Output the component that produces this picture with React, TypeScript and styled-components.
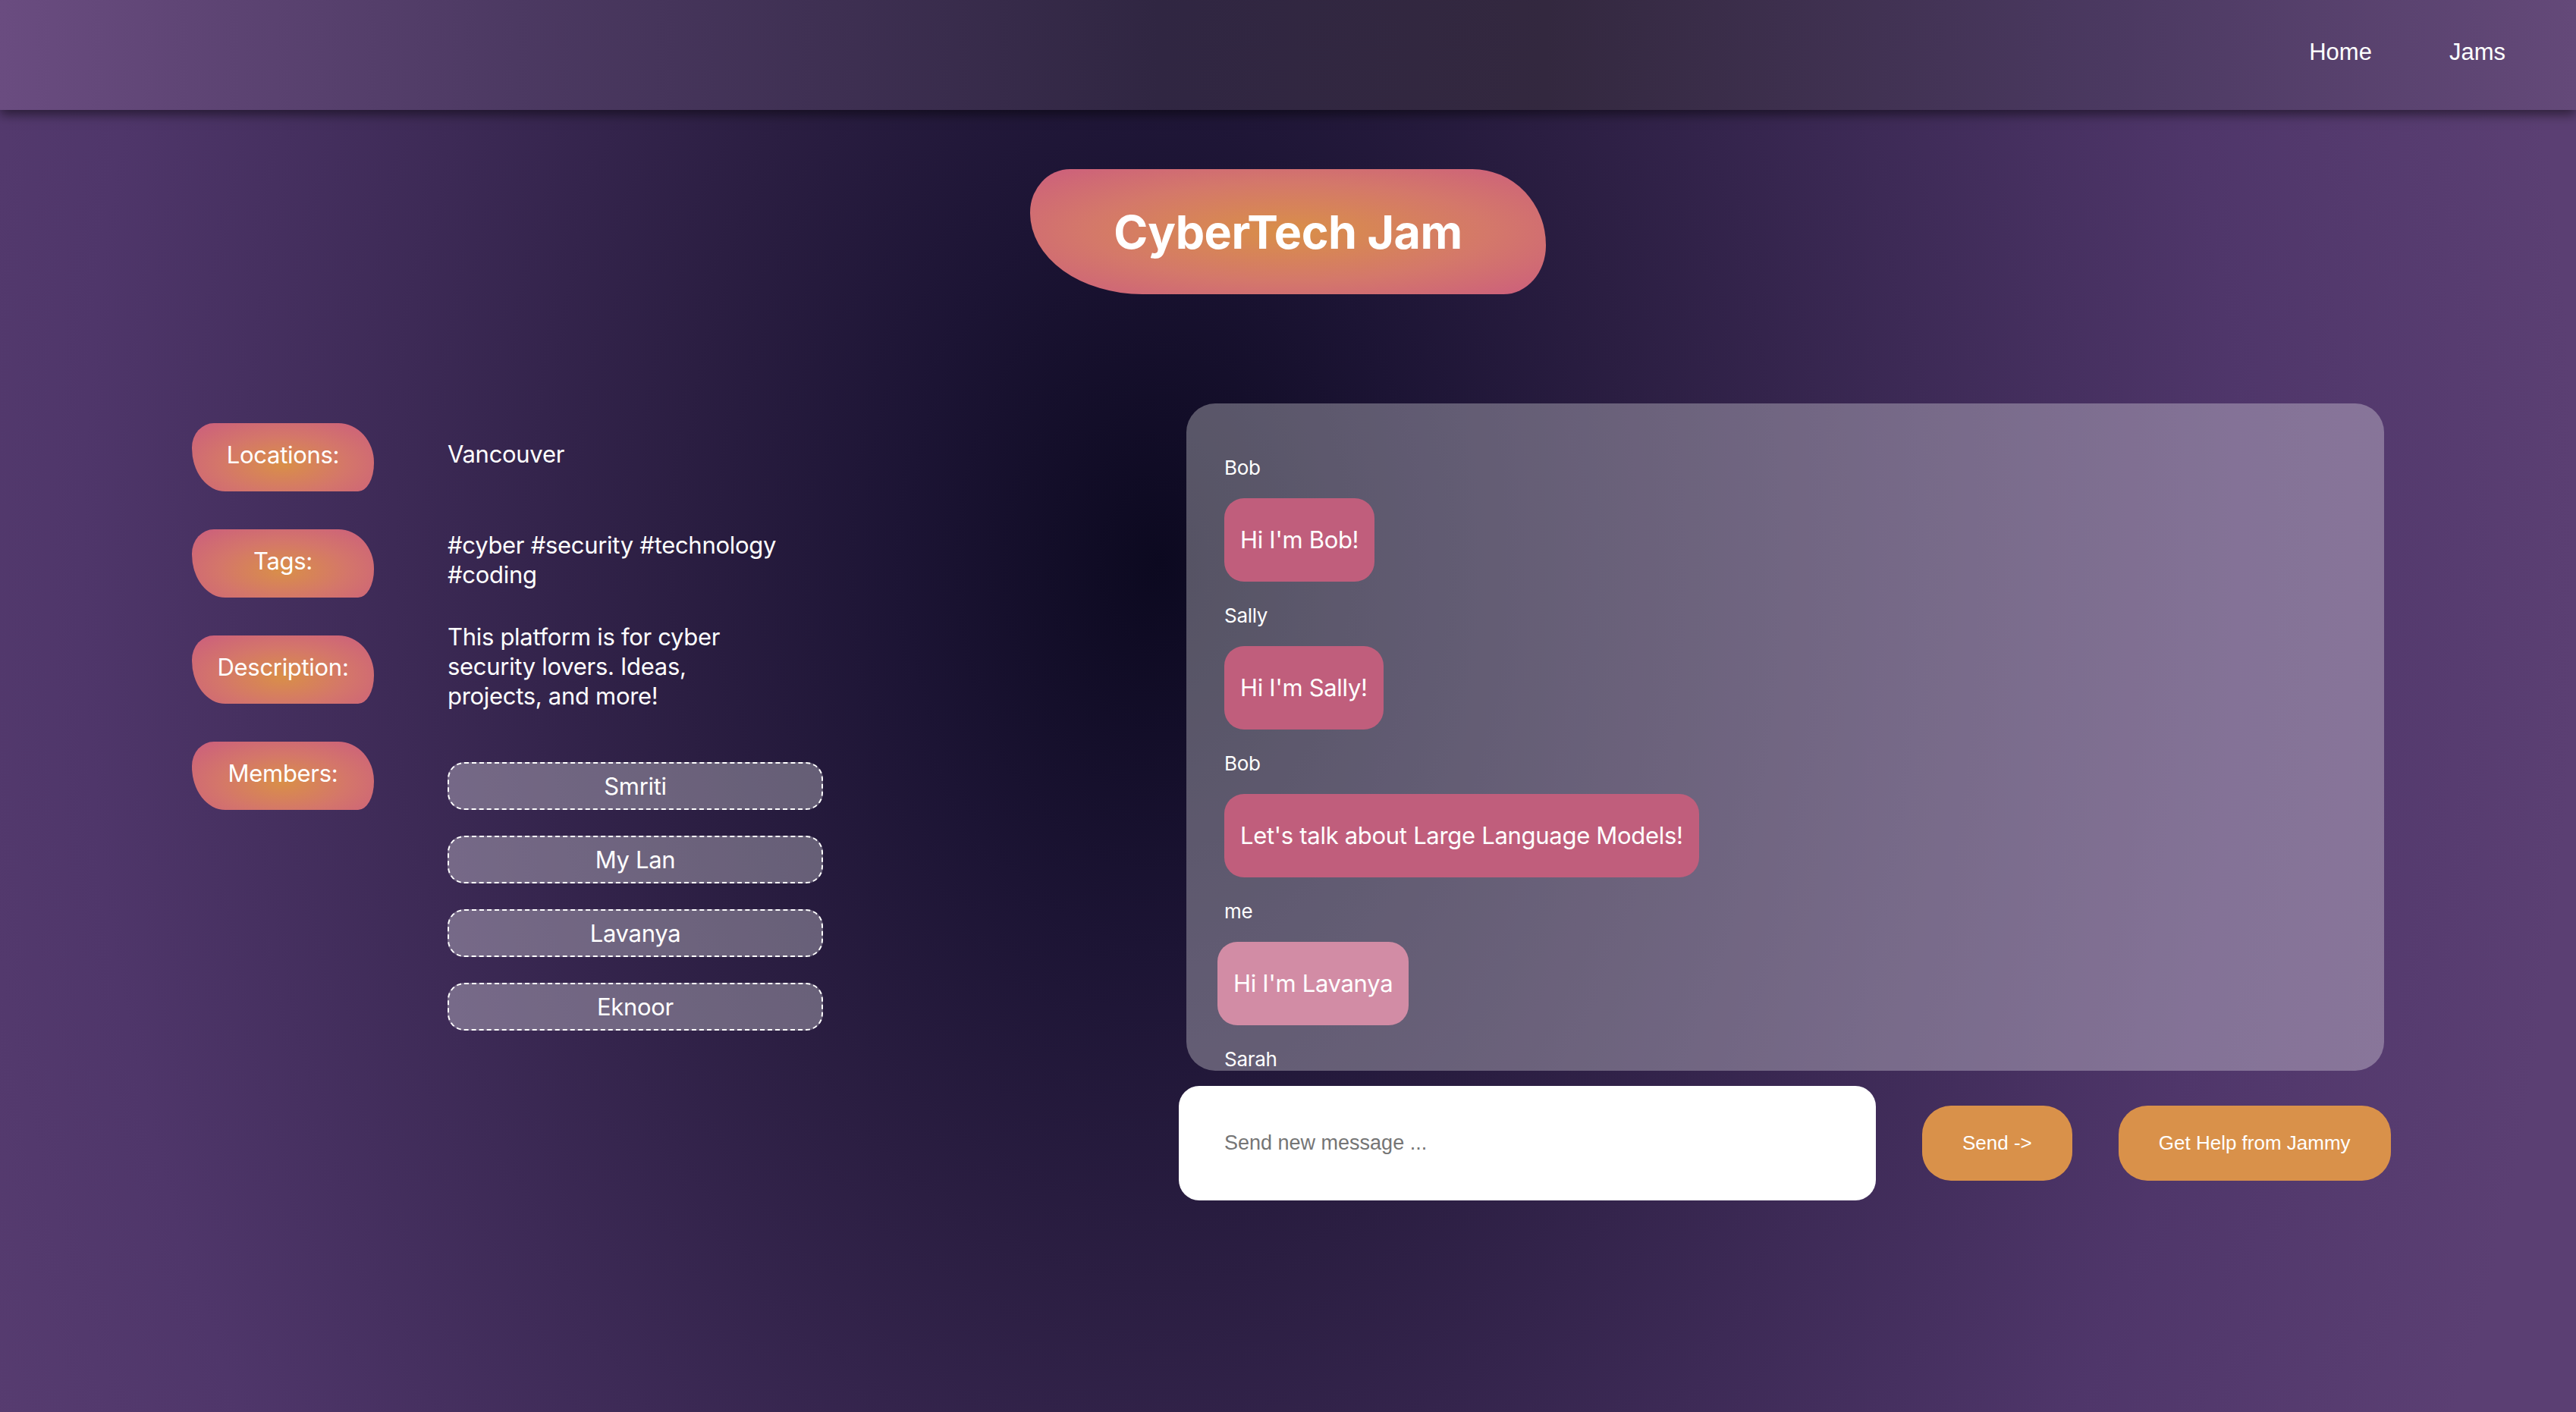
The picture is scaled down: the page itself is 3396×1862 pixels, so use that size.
import styled, { createGlobalStyle } from 'styled-components';

const GlobalStyle = createGlobalStyle`
  html, body {
    margin: 0;
    padding: 0;
  }

  body {
    font-family: Inter, "Noto Sans", sans-serif;
    letter-spacing: -0.3px;
    color: #fff;
  }

  * {
    box-sizing: border-box;
  }
`;

const Page = styled.div`
  min-height: 100vh;
  background: radial-gradient(ellipse 55% 150% at 45% 40%, #0c0920 0%, #1c1434 18%, #2b1e42 34%, #3d2a56 54%, #4f366a 76%, #5b3f73 100%);
`;

const Nav = styled.nav`
  position: relative;
  z-index: 1;
  height: 145px;
  display: flex;
  align-items: center;
  justify-content: flex-end;
  gap: 102px;
  padding: 0 93px 8px 0;
  background: linear-gradient(90deg, #6a4c80 0%, #4c3962 20%, #302642 45%, #33283f 60%, #4b3961 82%, #644979 100%);
  box-shadow: 0 6px 14px rgba(0, 0, 0, 0.5);
`;

const NavLink = styled.a`
  font-family: "Liberation Sans", Arial, sans-serif;
  font-size: 31px;
  letter-spacing: normal;
  color: #fff;
  text-decoration: none;
`;

const TitleBlob = styled.h1`
  margin: 78px auto 0;
  width: 680px;
  height: 165px;
  display: flex;
  align-items: center;
  justify-content: center;
  border-radius: 53px 97px 56px 148px / 57px 100px 64px 107px;
  background: radial-gradient(ellipse at center, #d98f48 0%, #d4786a 55%, #cc5e7d 100%);
  font-size: 61px;
  font-weight: 700;
  letter-spacing: -0.5px;
  color: #fff;
`;

const Main = styled.main`
  display: flex;
  justify-content: space-between;
  align-items: flex-start;
  padding: 144px 243px 0 253px;
`;

const Info = styled.div`
  display: flex;
  flex-direction: column;
  gap: 50px;
  margin-top: 26px;
`;

const InfoRow = styled.div<{ $top?: boolean }>`
  display: flex;
  align-items: ${(p) => (p.$top ? 'flex-start' : 'center')};
  gap: 97px;
  height: ${(p) => (p.$top ? 'auto' : '90px')};
`;

const LabelBlob = styled.div`
  flex: none;
  width: 240px;
  height: 90px;
  display: flex;
  align-items: center;
  justify-content: center;
  padding-bottom: 8px;
  border-radius: 29px 47px 21px 44px / 32px 52px 37px 57px;
  background: radial-gradient(ellipse at 50% 60%, #d98f48 0%, #d4766a 50%, #cb5d7e 100%);
  font-size: 31px;
`;

const Value = styled.div`
  width: 440px;
  margin-bottom: 10px;
  font-size: 31px;
  line-height: 39px;
`;

const MemberList = styled.div`
  display: flex;
  flex-direction: column;
  gap: 34px;
  margin-top: 27px;
`;

const Member = styled.div`
  width: 495px;
  height: 63px;
  border: 2px dashed #fff;
  border-radius: 22px;
  background: rgba(255, 255, 255, 0.3);
  display: flex;
  align-items: center;
  justify-content: center;
  font-size: 31px;
`;

const ChatColumn = styled.section`
  width: 1599px;
  display: flex;
  flex-direction: column;
`;

const ChatPanel = styled.div`
  margin: 0 10px;
  height: 880px;
  border-radius: 38px;
  background: rgba(255, 255, 255, 0.3);
  padding: 69px 50px 0;
  overflow: hidden;
`;

const Message = styled.div`
  display: flex;
  flex-direction: column;
  align-items: flex-start;
`;

const Sender = styled.div`
  font-size: 26px;
  line-height: 32px;
  margin-bottom: 24px;
`;

const Bubble = styled.div<{ $mine?: boolean }>`
  padding: 36px 21px;
  margin: 0 0 29px ${(p) => (p.$mine ? '-9px' : '0')};
  border-radius: 26px;
  background: ${(p) => (p.$mine ? '#d28ca5' : '#c05e7c')};
  font-size: 31px;
  line-height: 38px;
`;

const Composer = styled.div`
  display: flex;
  align-items: center;
  gap: 61px;
  margin-top: 20px;
`;

const MessageInput = styled.input`
  width: 919px;
  height: 151px;
  border: none;
  border-radius: 27px;
  background: #fff;
  padding: 0 60px;
  font-family: "Liberation Sans", Arial, sans-serif;
  font-size: 27px;
  letter-spacing: normal;
  color: #333;
  outline: none;

  &::placeholder {
    color: #757575;
  }
`;

const ActionButton = styled.button`
  height: 99px;
  padding: 0 53px;
  border: none;
  border-radius: 38px;
  background: #d9914a;
  color: #fff;
  font-family: "Liberation Sans", Arial, sans-serif;
  font-size: 26px;
  letter-spacing: normal;
  cursor: pointer;
`;

const details = [
  { label: 'Locations:', value: 'Vancouver' },
  { label: 'Tags:', value: '#cyber #security #technology #coding' },
  { label: 'Description:', value: 'This platform is for cyber security lovers. Ideas, projects, and more!' },
];

const members = ['Smriti', 'My Lan', 'Lavanya', 'Eknoor'];

const messages = [
  { sender: 'Bob', text: "Hi I'm Bob!" },
  { sender: 'Sally', text: "Hi I'm Sally!" },
  { sender: 'Bob', text: "Let's talk about Large Language Models!" },
  { sender: 'me', text: "Hi I'm Lavanya" },
  { sender: 'Sarah', text: '' },
];

export default function App() {
  return (
    <Page>
      <GlobalStyle />
      <Nav>
        <NavLink href="#">Home</NavLink>
        <NavLink href="#">Jams</NavLink>
      </Nav>

      <TitleBlob>CyberTech Jam</TitleBlob>

      <Main>
        <Info>
          {details.map((d) => (
            <InfoRow key={d.label}>
              <LabelBlob>{d.label}</LabelBlob>
              <Value>{d.value}</Value>
            </InfoRow>
          ))}
          <InfoRow $top>
            <LabelBlob>Members:</LabelBlob>
            <MemberList>
              {members.map((m) => (
                <Member key={m}>{m}</Member>
              ))}
            </MemberList>
          </InfoRow>
        </Info>

        <ChatColumn>
          <ChatPanel>
            {messages.map((m, i) => (
              <Message key={i}>
                <Sender>{m.sender}</Sender>
                {m.text && <Bubble $mine={m.sender === 'me'}>{m.text}</Bubble>}
              </Message>
            ))}
          </ChatPanel>
          <Composer>
            <MessageInput placeholder="Send new message ..." />
            <ActionButton>Send -&gt;</ActionButton>
            <ActionButton>Get Help from Jammy</ActionButton>
          </Composer>
        </ChatColumn>
      </Main>
    </Page>
  );
}
